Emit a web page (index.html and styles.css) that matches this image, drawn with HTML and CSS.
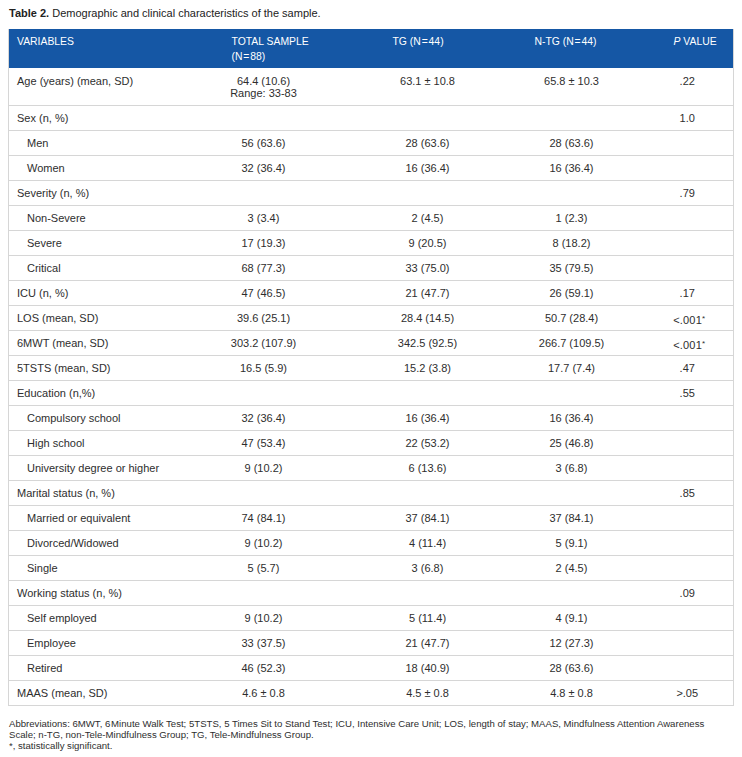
FILE: index.html
```html
<!DOCTYPE html>
<html lang="en">
<head>
<meta charset="utf-8">
<title>Table 2</title>
<link rel="stylesheet" href="styles.css">
</head>
<body>
<div class="page">
  <p class="caption"><b>Table 2.</b> Demographic and clinical characteristics of the sample.</p>
  <table class="tbl">
    <colgroup>
      <col class="w1"><col class="w2"><col class="w3"><col class="w4"><col class="w5">
    </colgroup>
    <thead>
      <tr>
        <th>VARIABLES</th>
        <th>TOTAL SAMPLE<br>(N&#8202;=&#8202;88)</th>
        <th>TG (N&#8202;=&#8202;44)</th>
        <th>N-TG (N&#8202;=&#8202;44)</th>
        <th><i>P</i> VALUE</th>
      </tr>
    </thead>
    <tbody>
      <tr class="top"><td>Age (years) (mean, SD)</td><td>64.4 (10.6)<br>Range: 33-83</td><td>63.1 ± 10.8</td><td>65.8 ± 10.3</td><td>.22</td></tr>
      <tr><td>Sex (n, %)</td><td></td><td></td><td></td><td>1.0</td></tr>
      <tr class="sub"><td>Men</td><td>56 (63.6)</td><td>28 (63.6)</td><td>28 (63.6)</td><td></td></tr>
      <tr class="sub"><td>Women</td><td>32 (36.4)</td><td>16 (36.4)</td><td>16 (36.4)</td><td></td></tr>
      <tr><td>Severity (n, %)</td><td></td><td></td><td></td><td>.79</td></tr>
      <tr class="sub"><td>Non-Severe</td><td>3 (3.4)</td><td>2 (4.5)</td><td>1 (2.3)</td><td></td></tr>
      <tr class="sub"><td>Severe</td><td>17 (19.3)</td><td>9 (20.5)</td><td>8 (18.2)</td><td></td></tr>
      <tr class="sub"><td>Critical</td><td>68 (77.3)</td><td>33 (75.0)</td><td>35 (79.5)</td><td></td></tr>
      <tr><td>ICU (n, %)</td><td>47 (46.5)</td><td>21 (47.7)</td><td>26 (59.1)</td><td>.17</td></tr>
      <tr><td>LOS (mean, SD)</td><td>39.6 (25.1)</td><td>28.4 (14.5)</td><td>50.7 (28.4)</td><td class="sig">&lt;.001<sup>*</sup></td></tr>
      <tr><td>6MWT (mean, SD)</td><td>303.2 (107.9)</td><td>342.5 (92.5)</td><td>266.7 (109.5)</td><td class="sig">&lt;.001<sup>*</sup></td></tr>
      <tr><td>5TSTS (mean, SD)</td><td>16.5 (5.9)</td><td>15.2 (3.8)</td><td>17.7 (7.4)</td><td>.47</td></tr>
      <tr><td>Education (n,%)</td><td></td><td></td><td></td><td>.55</td></tr>
      <tr class="sub"><td>Compulsory school</td><td>32 (36.4)</td><td>16 (36.4)</td><td>16 (36.4)</td><td></td></tr>
      <tr class="sub"><td>High school</td><td>47 (53.4)</td><td>22 (53.2)</td><td>25 (46.8)</td><td></td></tr>
      <tr class="sub"><td>University degree or higher</td><td>9 (10.2)</td><td>6 (13.6)</td><td>3 (6.8)</td><td></td></tr>
      <tr><td>Marital status (n, %)</td><td></td><td></td><td></td><td>.85</td></tr>
      <tr class="sub"><td>Married or equivalent</td><td>74 (84.1)</td><td>37 (84.1)</td><td>37 (84.1)</td><td></td></tr>
      <tr class="sub"><td>Divorced/Widowed</td><td>9 (10.2)</td><td>4 (11.4)</td><td>5 (9.1)</td><td></td></tr>
      <tr class="sub"><td>Single</td><td>5 (5.7)</td><td>3 (6.8)</td><td>2 (4.5)</td><td></td></tr>
      <tr><td>Working status (n, %)</td><td></td><td></td><td></td><td>.09</td></tr>
      <tr class="sub"><td>Self employed</td><td>9 (10.2)</td><td>5 (11.4)</td><td>4 (9.1)</td><td></td></tr>
      <tr class="sub"><td>Employee</td><td>33 (37.5)</td><td>21 (47.7)</td><td>12 (27.3)</td><td></td></tr>
      <tr class="sub"><td>Retired</td><td>46 (52.3)</td><td>18 (40.9)</td><td>28 (63.6)</td><td></td></tr>
      <tr class="last"><td>MAAS (mean, SD)</td><td>4.6 ± 0.8</td><td>4.5 ± 0.8</td><td>4.8 ± 0.8</td><td>&gt;.05</td></tr>
    </tbody>
  </table>
  <div class="notes">
    <p>Abbreviations: 6MWT, 6&#8202;Minute Walk Test; 5TSTS, 5 Times Sit to Stand Test; ICU, Intensive Care Unit; LOS, length of stay; MAAS, Mindfulness Attention Awareness Scale; n-TG, non-Tele-Mindfulness Group; TG, Tele-Mindfulness Group.</p>
    <p>*, statistically significant.</p>
  </div>
</div>
</body>
</html>
```

FILE: styles.css
```css
html, body {
  margin: 0;
  padding: 0;
  background: #ffffff;
}

.page {
  padding: 7px 9px 0 8px;
  font-family: "Liberation Sans", Arial, sans-serif;
  color: #2e2e2e;
}

.caption {
  margin: 0 0 10px 1px;
  font-size: 11px;
  line-height: 12px;
  color: #222;
}

.caption b {
  font-weight: bold;
}

.tbl {
  width: 725px;
  table-layout: fixed;
  border-collapse: collapse;
  border-left: 1px solid #d6d6d6;
  border-right: 1px solid #d6d6d6;
  font-size: 11px;
}

.w1 { width: 215px; }
.w2 { width: 161px; }
.w3 { width: 142px; }
.w4 { width: 139px; }
.w5 { width: 68px; }

.tbl thead th {
  background: #1557a5;
  color: #ffffff;
  font-weight: normal;
  font-size: 10.4px;
  line-height: 15px;
  text-align: left;
  vertical-align: top;
  padding: 5px 4px 4px 8px;
  border: none;
}

.tbl tbody td {
  border-bottom: 1px solid #d6d6d6;
  line-height: 12px;
  padding: 6px 0;
  vertical-align: middle;
  text-align: center;
  white-space: nowrap;
}

.tbl tbody td:nth-child(1) {
  text-align: left;
  padding-left: 8px;
}

.tbl tbody td:nth-child(2) { padding-right: 81px; }
.tbl tbody td:nth-child(3) { padding-right: 56px; }
.tbl tbody td:nth-child(4) { padding-right: 49px; }
.tbl tbody td:nth-child(5) { padding-right: 24px; }

.tbl tbody tr.sub td:nth-child(1) {
  padding-left: 18px;
}

.tbl tbody tr.top td {
  vertical-align: top;
  padding-top: 7px;
  padding-bottom: 6px;
}

.tbl tbody td.sig {
  padding-top: 8px;
  padding-bottom: 4px;
  padding-right: 20px;
  letter-spacing: 0.2px;
}

.tbl tbody td.sig sup {
  font-size: 8px;
  line-height: 0;
  vertical-align: 3px;
}

.notes {
  margin-top: 12px;
  width: 712px;
  font-size: 9.6px;
  line-height: 11px;
  color: #2e2e2e;
}

.notes p {
  margin: 0;
  padding-left: 1px;
}
```
